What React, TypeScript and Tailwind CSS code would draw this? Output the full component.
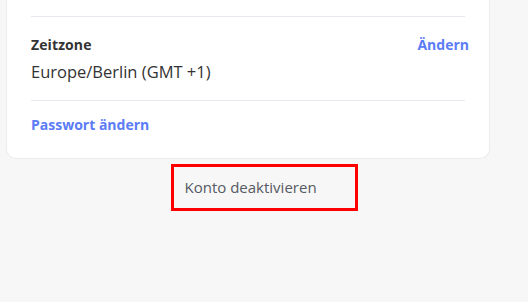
import React from "react";

export default function App() {
  return (
    <div
      className="w-[528px] h-[302px] bg-[#f7f7f7] overflow-hidden"
      style={{ fontFamily: "'Open Sans', 'Noto Sans', sans-serif" }}
    >
      <div className="ml-[6px] w-[484px] bg-white border-x border-b border-[#ececec] rounded-b-[10px] px-6">
        <div className="h-[16px]" />
        <div className="border-t border-[#e8e8ee]" />
        <div className="pt-[18px] pb-[17px]">
          <div className="flex items-center justify-between h-[18px]">
            <span className="text-[14px] font-bold text-[#333333] tracking-[0.1px]">Zeitzone</span>
            <button className="text-[14px] font-bold text-[#5b7cf6] -mr-1">Ändern</button>
          </div>
          <div className="mt-[8px] h-[22px] flex items-center text-[16.5px] text-[#333333]">
            Europe/Berlin (GMT +1)
          </div>
        </div>
        <div className="border-t border-[#e8e8ee]" />
        <div className="pt-[14px] pb-[25px]">
          <div className="h-[18px] flex items-center text-[14px] font-bold text-[#5b7cf6]">
            Passwort ändern
          </div>
        </div>
      </div>
      <div className="flex justify-center mt-[5px]">
        <div className="w-[187px] h-[47px] border-[3px] border-[#ff0000] flex items-center pl-[11px]">
          <span className="text-[15px] text-[#555a63]">Konto deaktivieren</span>
        </div>
      </div>
    </div>
  );
}
